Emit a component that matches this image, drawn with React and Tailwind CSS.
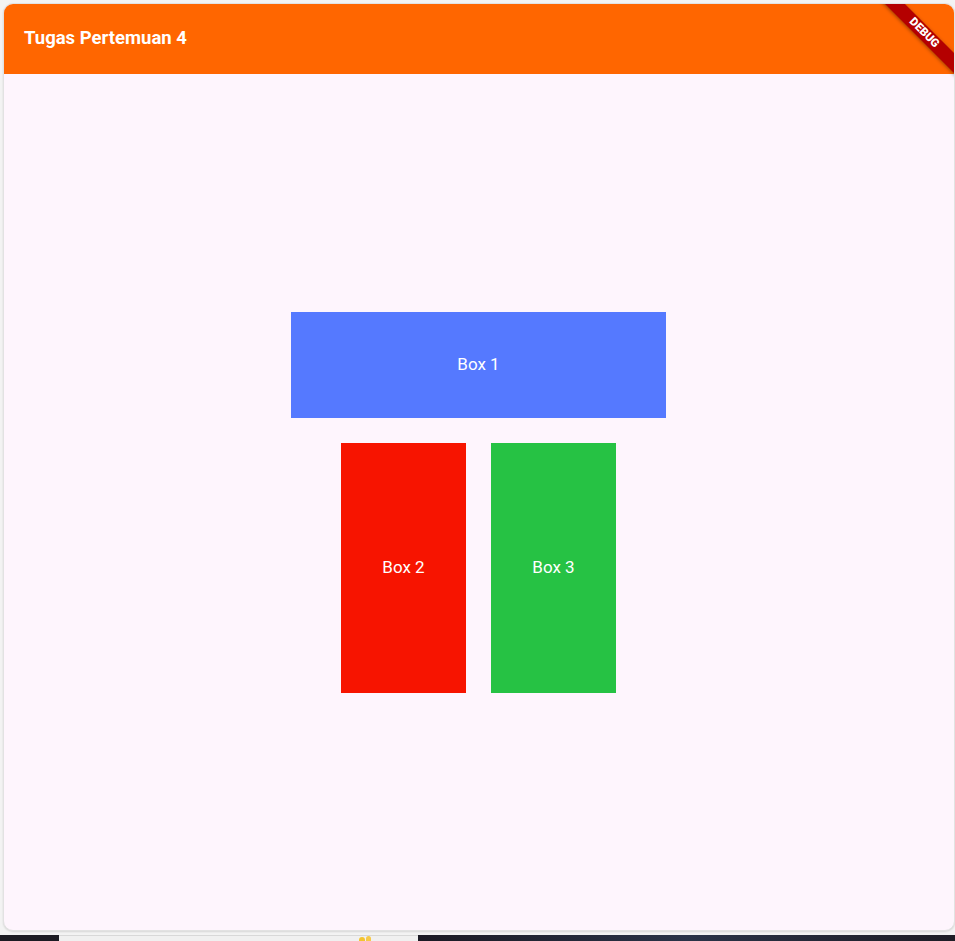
import React from "react";

const Box = ({ label, className }) => (
  <div className={`flex items-center justify-center text-white text-[17px] ${className}`}>
    {label}
  </div>
);

const App = () => {
  return (
    <div
      className="flex flex-col w-full h-[941px] bg-[#f3f3f3] overflow-hidden"
      style={{ fontFamily: "Roboto, 'Noto Sans', sans-serif" }}
    >
      {/* App window */}
      <div className="relative mt-[3px] ml-[3px] w-[952px] h-[928px] flex flex-col rounded-[10px] overflow-hidden border border-[#e2e2e2] shadow-[0_1px_2px_rgba(0,0,0,0.12)] bg-[#fef5fd]">
        {/* AppBar */}
        <header className="h-[70px] shrink-0 bg-[#ff6600] flex items-center px-[20px]">
          <h1 className="text-white text-[18.5px] font-bold">
            Tugas Pertemuan 4
          </h1>
        </header>

        {/* Body */}
        <main className="flex-1 flex flex-col items-center justify-center gap-[25px] pr-[1px]">
          <Box label="Box 1" className="w-[375px] h-[106px] bg-[#5579ff]" />
          <div className="flex gap-[25px]">
            <Box label="Box 2" className="w-[125px] h-[250px] bg-[#f71400]" />
            <Box label="Box 3" className="w-[125px] h-[250px] bg-[#26c244]" />
          </div>
        </main>

        {/* Debug banner */}
        <div className="absolute top-[22px] right-[-32px] w-[124px] h-[14px] rotate-45 bg-[#b40000] shadow-[0_1px_4px_rgba(0,0,0,0.4)] flex items-center justify-center">
          <span className="text-white text-[11.5px] font-black leading-none">
            DEBUG
          </span>
        </div>
      </div>

      {/* Taskbar peeking at the bottom */}
      <div className="mt-auto h-[6px] flex">
        <div className="w-[59px] bg-[#1c1b23]" />
        <div className="relative w-[359px] bg-[#f0f0f0] border-t border-[#d8d8d8]">
          <div className="absolute left-[300px] top-[1px] w-[6px] h-[5px] bg-[#f4c430] rounded-t-full" />
          <div className="absolute left-[307px] top-0 w-[5px] h-[6px] bg-[#f6c94a] rounded-t-full" />
        </div>
        <div className="flex-1 bg-gradient-to-r from-[#1b1a24] via-[#2a3348] to-[#1e1d26]" />
      </div>
    </div>
  );
};

export default App;
